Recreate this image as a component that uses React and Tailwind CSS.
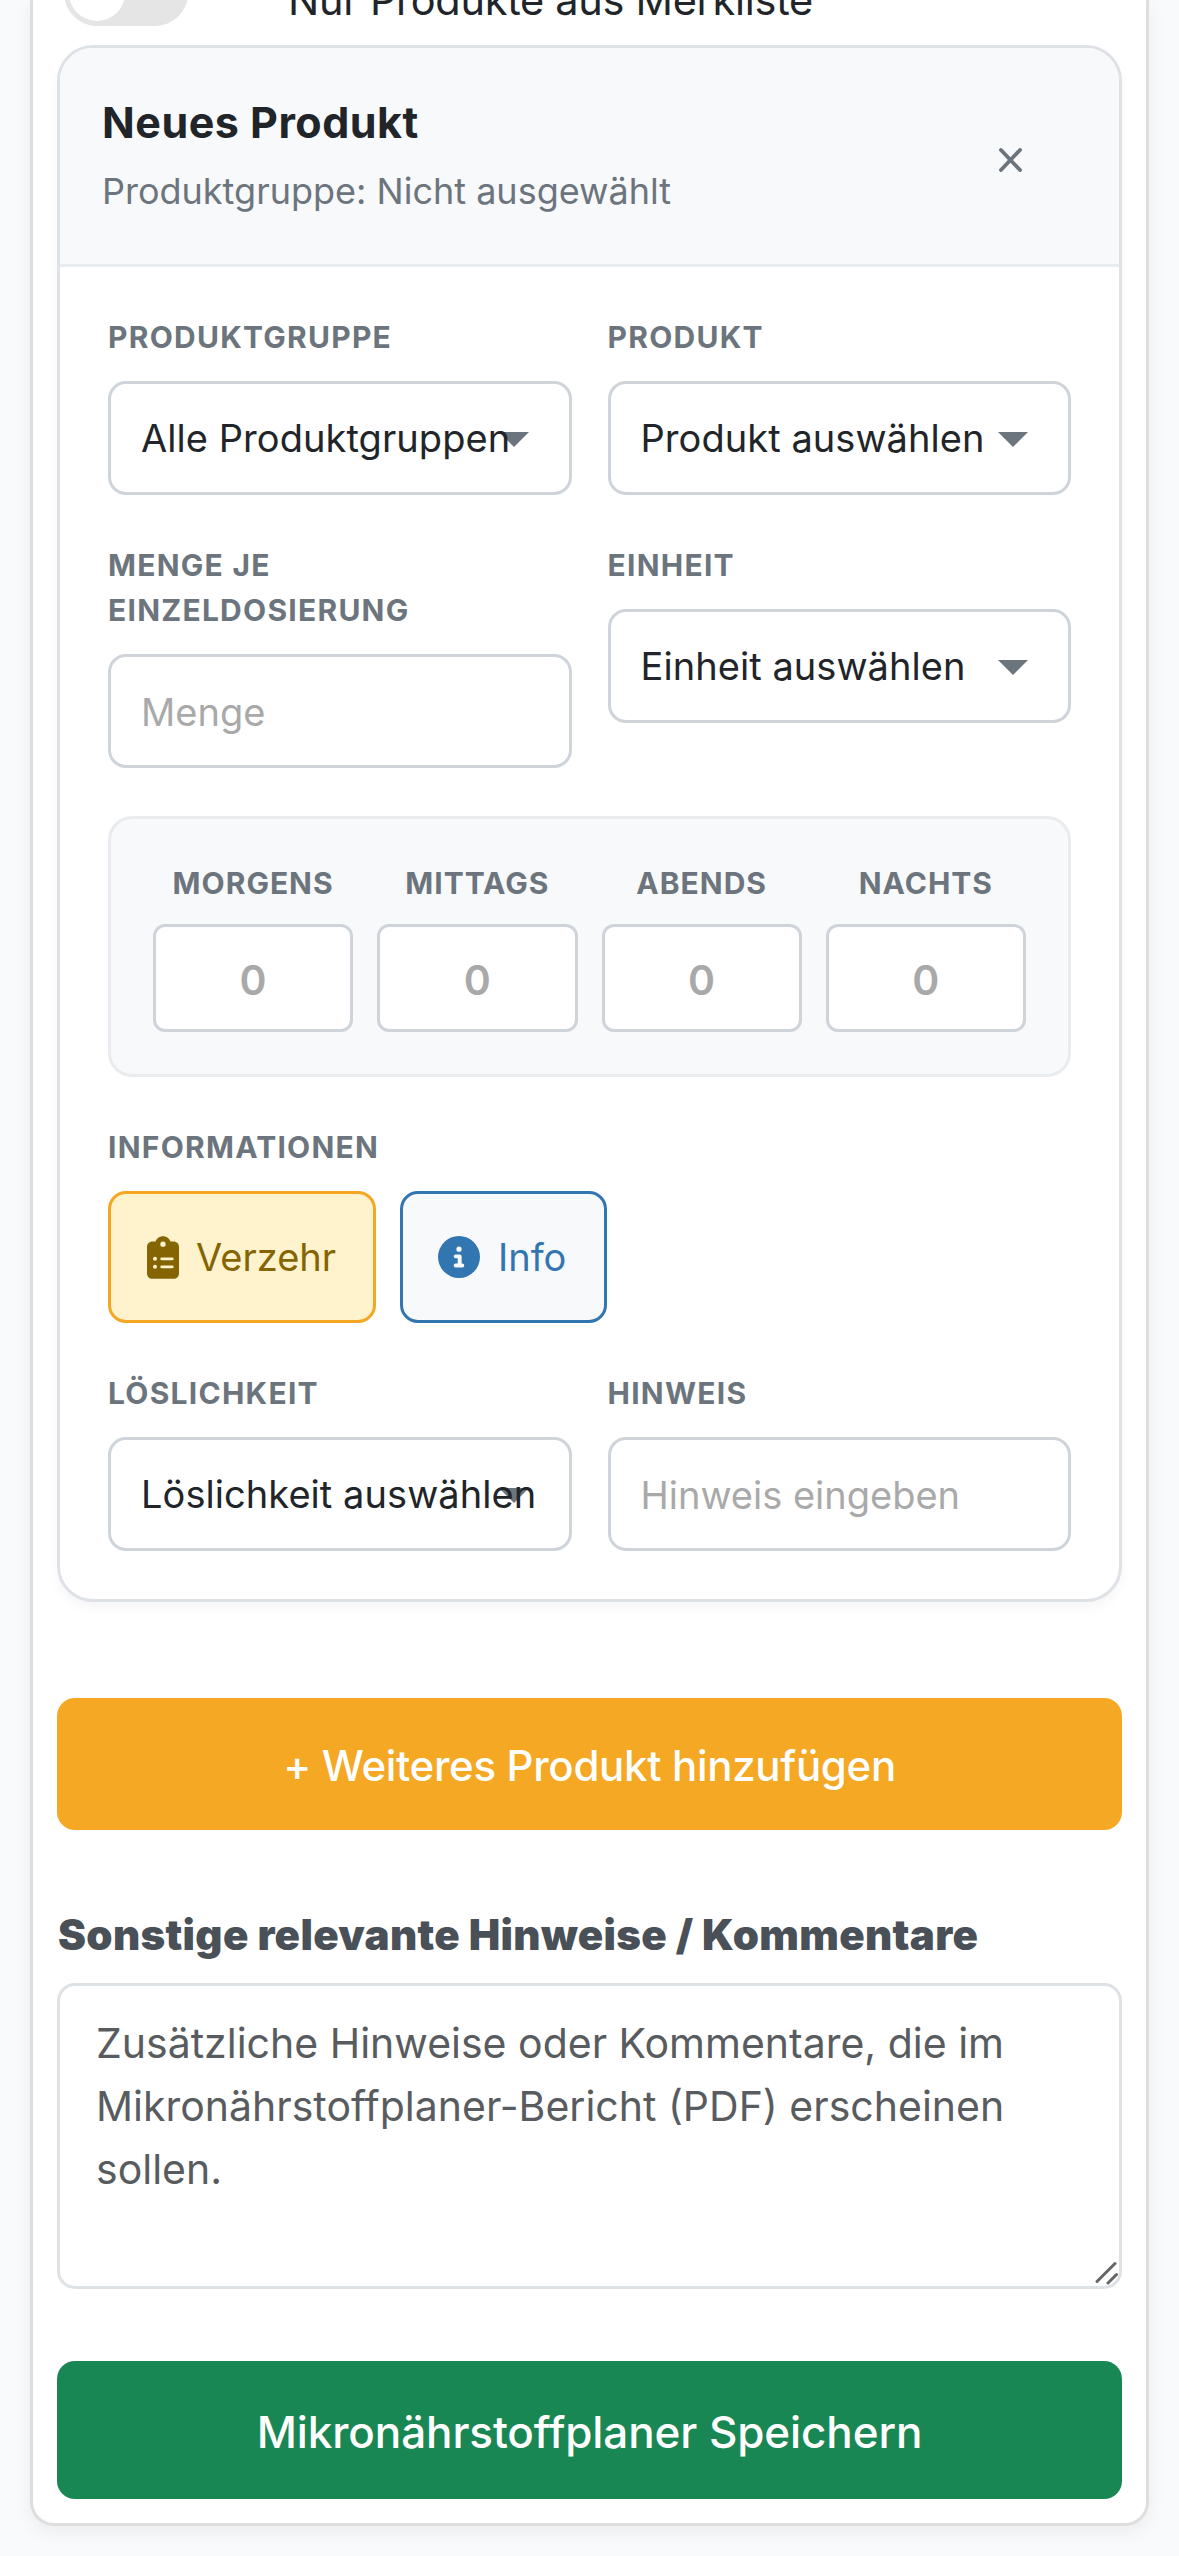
import React from 'react'
import { FaClipboardList, FaCircleInfo } from 'react-icons/fa6'

const DOSES = ['Morgens', 'Mittags', 'Abends', 'Nachts']

function Label({ children, className = 'tracking-[1.25px]' }) {
  return (
    <div className={`text-[30px] leading-[45px] font-bold uppercase text-[#6c757d] ${className}`}>
      {children}
    </div>
  )
}

function Field({ label, children }) {
  return (
    <div className="flex flex-col gap-[21px] min-w-0">
      <Label>{label}</Label>
      {children}
    </div>
  )
}

function SelectBox({ value }) {
  return (
    <button
      type="button"
      className="relative flex items-center w-full h-[114px] pl-[30px] rounded-[18px] border-3 border-[#ced4da] bg-white text-[38px] tracking-[0.06px] text-[#212529] whitespace-nowrap"
    >
      {/* caret sits behind the value, long values run over it */}
      <svg className="absolute right-[40px] top-[48px] w-[30px] h-[15px]" viewBox="0 0 30 15">
        <path d="M0 0h30L15 15z" fill="#6c757d" />
      </svg>
      <span className="relative">{value}</span>
    </button>
  )
}

function TextInput({ placeholder }) {
  return (
    <input
      placeholder={placeholder}
      className="w-full h-[114px] px-[30px] pt-px rounded-[18px] border-3 border-[#ced4da] bg-white text-[38px] text-[#212529] placeholder:text-[#a9a9a9]"
    />
  )
}

function ProductCard() {
  return (
    <section className="rounded-[36px] border-3 border-[#dee2e6] bg-white shadow-[0_6px_12px_rgba(0,0,0,0.04)] overflow-hidden">
      <header className="flex items-center justify-between h-[219px] pt-[8px] pl-[42px] pr-[97px] border-b-3 border-[#e9ecef] bg-[#f8f9fb]">
        <div className="pb-[13px]">
          <h2 className="text-[43px] leading-[64px] font-bold tracking-[0.5px] text-[#212529]">Neues Produkt</h2>
          <p className="mt-[10px] text-[36px] leading-[54px] text-[#6c757d]">Produktgruppe: Nicht ausgewählt</p>
        </div>
        <button type="button" aria-label="Entfernen">
          <svg className="w-[23px] h-[24px]" viewBox="0 0 23 24" fill="none" stroke="#6c757d" strokeWidth="3.8" strokeLinecap="round">
            <path d="M2 2l19 20M21 2L2 22" />
          </svg>
        </button>
      </header>

      <div className="flex flex-col gap-[48px] p-[48px]">
        <div className="grid grid-cols-2 gap-x-[36px] gap-y-[48px]">
          <Field label="Produktgruppe"><SelectBox value="Alle Produktgruppen" /></Field>
          <Field label="Produkt"><SelectBox value="Produkt auswählen" /></Field>
          <Field label="Menge je Einzeldosierung"><TextInput placeholder="Menge" /></Field>
          <Field label="Einheit"><SelectBox value="Einheit auswählen" /></Field>
        </div>

        <div className="grid grid-cols-4 gap-[24px] p-[42px] rounded-[24px] border-3 border-[#e9ecef] bg-[#f8f9fb]">
          {DOSES.map((dose) => (
            <div key={dose} className="flex flex-col gap-[18px] min-w-0">
              <Label className="text-center tracking-[1px]">{dose}</Label>
              <input
                placeholder="0"
                className="w-full h-[108px] pt-[3px] rounded-[12px] border-3 border-[#ced4da] bg-white text-center text-[41px] font-semibold placeholder:text-[#a9a9a9]"
              />
            </div>
          ))}
        </div>

        <Field label="Informationen">
          <div className="flex gap-[24px]">
            <button type="button" className="flex items-center gap-[17px] w-[268px] h-[132px] pl-[36px] rounded-[18px] border-3 border-[#f5a623] bg-[#fff3cd] text-[38px] text-[#856404]">
              <FaClipboardList className="w-[32px] h-[43px]" />
              Verzehr
            </button>
            <button type="button" className="flex items-center gap-[18px] w-[207px] h-[132px] pl-[35px] rounded-[18px] border-3 border-[#3276b1] bg-[#f8f9fb] text-[38px] text-[#3276b1]">
              <FaCircleInfo className="size-[42px]" />
              Info
            </button>
          </div>
        </Field>

        <div className="grid grid-cols-2 gap-x-[36px]">
          <Field label="Löslichkeit"><SelectBox value="Löslichkeit auswählen" /></Field>
          <Field label="Hinweis"><TextInput placeholder="Hinweis eingeben" /></Field>
        </div>
      </div>
    </section>
  )
}

export default function App() {
  return (
    <div className="h-[2556px] px-[30px] overflow-hidden bg-[#f9fafc] font-['Inter',sans-serif]">
      <main className="h-[2526px] px-[24px] rounded-b-[24px] border-x-3 border-b-3 border-[#dedede] bg-white shadow-[0_6px_18px_rgba(0,0,0,0.06)]">
        {/* watchlist switch, scrolled halfway out of view */}
        <div className="flex items-end h-[45px] overflow-hidden">
          <div className="flex items-center h-[66px] mb-[19px] ml-[7px]">
            <div className="w-[124px] h-[66px] p-[5px] rounded-full bg-[#e5e5e5]">
              <div className="size-[56px] rounded-full bg-white" />
            </div>
            <span className="ml-[100px] pt-[14px] text-[41.5px] leading-[52px] tracking-[-0.3px] text-[#212529] whitespace-nowrap">
              Nur Produkte aus Merkliste
            </span>
          </div>
        </div>

        <ProductCard />

        <button type="button" className="block w-full h-[132px] mt-[96px] pt-[3px] rounded-[18px] bg-[#f4a824] text-[42px] font-medium tracking-[-0.32px] text-white">
          + Weiteres Produkt hinzufügen
        </button>

        <h3 className="mt-[73px] ml-px text-[42px] leading-[63px] font-black tracking-[0.33px] text-[#495057] whitespace-nowrap">
          Sonstige relevante Hinweise / Kommentare
        </h3>
        <div className="relative mt-[17px]">
          <textarea
            placeholder="Zusätzliche Hinweise oder Kommentare, die im Mikronährstoffplaner-Bericht (PDF) erscheinen sollen."
            className="block w-full h-[306px] px-[36px] pt-[26px] rounded-[18px] border-3 border-[#dee2e6] bg-white resize-none text-[41px] leading-[63px] placeholder:text-[#595c5f]"
          />
          <svg className="absolute right-[4px] bottom-[4px] w-[24px] h-[24px]" viewBox="0 0 24 24" fill="none" stroke="#666" strokeWidth="3" strokeLinecap="round">
            <path d="M3 20.500L21 2.500M14 22L22.500 13.500" />
          </svg>
        </div>

        <button type="button" className="block w-full h-[138px] mt-[72px] pt-[3px] rounded-[18px] bg-[#198754] text-[44px] font-medium tracking-[-0.1px] text-white">
          Mikronährstoffplaner Speichern
        </button>
      </main>
    </div>
  )
}
